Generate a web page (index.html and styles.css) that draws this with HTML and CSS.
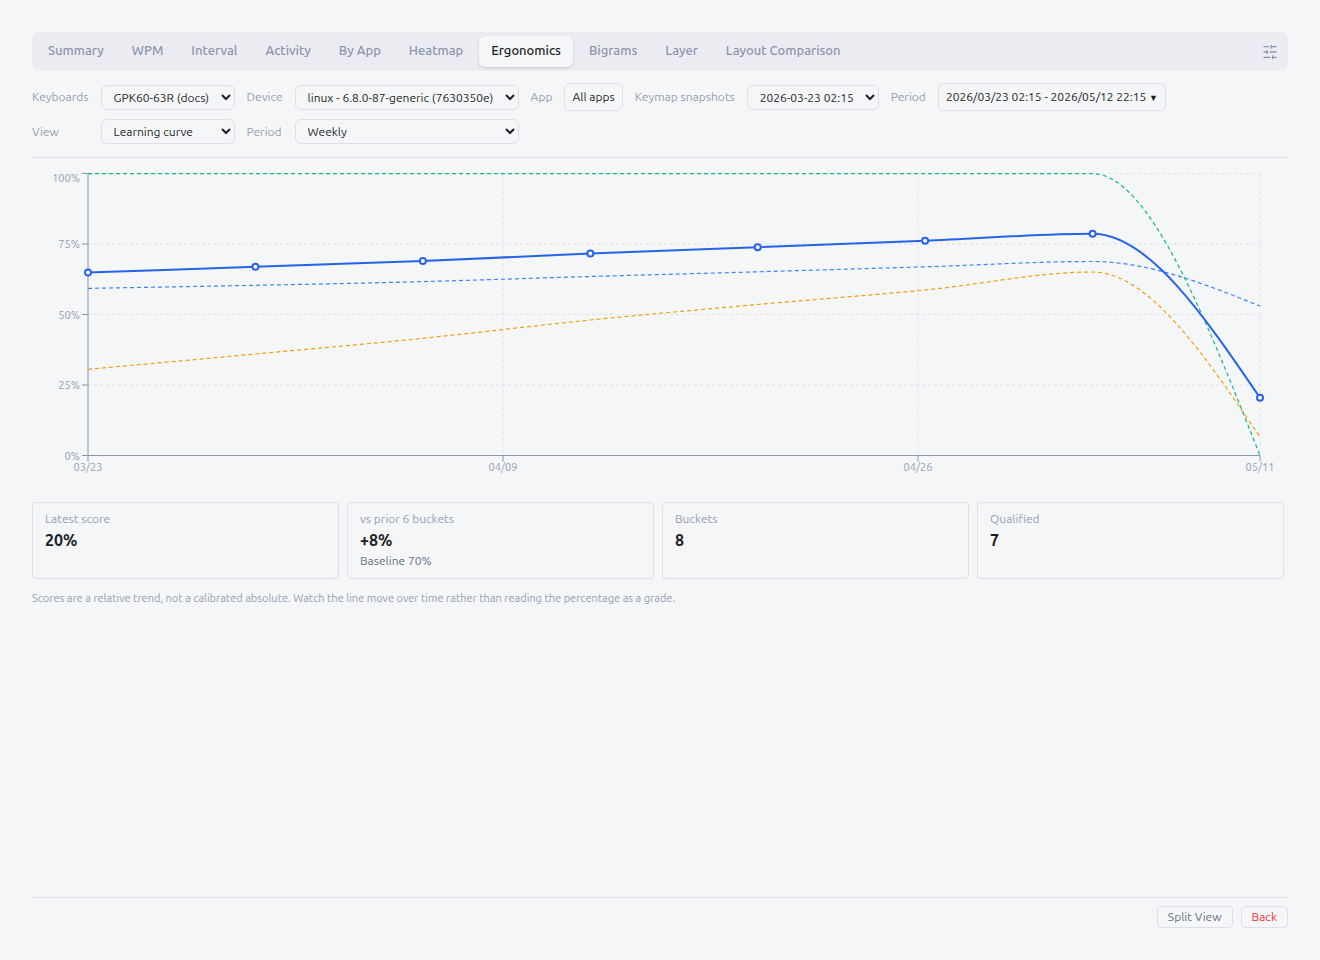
FILE: index.html
```html
<!DOCTYPE html>
<html lang="en">
<head>
  <meta charset="UTF-8">
  <meta name="viewport" content="width=device-width, initial-scale=1.0">
  <title>Typing Analytics</title>
  <link rel="stylesheet" href="styles.css">
</head>
<body>

  <!-- Tabs -->
  <nav class="tabs">
    <button class="tab">Summary</button>
    <button class="tab">WPM</button>
    <button class="tab">Interval</button>
    <button class="tab">Activity</button>
    <button class="tab">By App</button>
    <button class="tab">Heatmap</button>
    <button class="tab active">Ergonomics</button>
    <button class="tab">Bigrams</button>
    <button class="tab">Layer</button>
    <button class="tab">Layout Comparison</button>
    <button class="tab-settings" aria-label="Settings">
      <svg width="16" height="16" viewBox="0 0 24 24" fill="none" stroke="currentColor" stroke-width="2" stroke-linecap="round">
        <path d="M21 4h-7M10 4H3M21 12h-9M8 12H3M21 20h-5M12 20H3M14 2v4M8 10v4M16 18v4"/>
      </svg>
    </button>
  </nav>

  <!-- Filters -->
  <div class="filters">
    <label for="keyboard">Keyboards</label>
    <select id="keyboard"><option>GPK60-63R (docs)</option></select>
    <label for="device">Device</label>
    <select id="device"><option>linux - 6.8.0-87-generic (7630350e)</option></select>
    <label for="app">App</label>
    <button class="filter-btn" id="app">All apps</button>
    <label for="snapshot">Keymap snapshots</label>
    <select id="snapshot"><option>2026-03-23 02:15</option></select>
    <label for="range">Period</label>
    <button class="filter-btn" id="range">2026/03/23 02:15 - 2026/05/12 22:15 <span class="caret">▼</span></button>

    <label for="view">View</label>
    <select id="view"><option>Learning curve</option></select>
    <label for="period">Period</label>
    <select id="period"><option>Weekly</option></select>
  </div>

  <main class="content">
    <!-- Learning curve -->
    <svg class="chart" viewBox="0 0 1256 325" role="img" aria-label="Learning curve">
      <g class="grid">
        <path d="M56 8.5H1228M56 79H1228M56 149.5H1228M56 220H1228"/>
        <path d="M471 8.5V290.5M886 8.5V290.5M1228 8.5V290.5"/>
      </g>
      <g class="axis">
        <path d="M56 8.5V290.5M56 290.5H1228"/>
        <path d="M50 8.5h6M50 79h6M50 149.5h6M50 220h6M50 290.5h6"/>
        <path d="M56 290.5v6M471 290.5v6M886 290.5v6M1228 290.5v6"/>
      </g>
      <g class="tick-y">
        <text x="48" y="17">100%</text>
        <text x="48" y="83">75%</text>
        <text x="48" y="154">50%</text>
        <text x="48" y="224">25%</text>
        <text x="48" y="295">0%</text>
      </g>
      <g class="tick-x">
        <text x="56" y="306">03/23</text>
        <text x="471" y="306">04/09</text>
        <text x="886" y="306">04/26</text>
        <text x="1228" y="306">05/11</text>
      </g>
      <path class="line dashed blue" d="M56 123.4C111.8 122.4 167.6 121.4 223.4 120.3C279.2 119.2 335.1 118.1 390.9 116.6C446.7 115.1 502.5 113.1 558.3 111.5C614.1 109.9 669.9 108.4 725.7 106.8C781.5 105.2 837.3 103.5 893.1 101.8C948.9 100.1 1004.8 96.5 1060.6 96.5C1116.4 96.5 1172.2 118.7 1228 141"/>
      <path class="line dashed green" d="M56 8.7H1060.6C1116.4 8.7 1172.2 149.5 1228 290.5"/>
      <path class="line dashed orange" d="M56 204.3C111.8 199.2 167.6 194.2 223.4 189C279.2 183.8 335.1 179 390.9 173.3C446.7 167.6 502.5 160.6 558.3 155C614.1 149.4 669.9 144.5 725.7 139.5C781.5 134.5 837.3 130.4 893.1 125C948.9 119.6 1004.8 107 1060.6 107C1116.4 107 1172.2 189.5 1228 272"/>
      <path class="line score" d="M56 107.6C111.8 105.7 167.6 103.7 223.4 101.8C279.2 99.8 335.1 98.1 390.9 95.9C446.7 93.7 502.5 90.9 558.3 88.6C614.1 86.3 669.9 84.3 725.7 82.2C781.5 80.1 837.3 78 893.1 75.8C948.9 73.6 1004.8 68.8 1060.6 68.8C1116.4 68.8 1172.2 150.8 1228 232.8"/>
      <g class="dots">
        <circle cx="56" cy="107.6" r="3"/>
        <circle cx="223.4" cy="101.8" r="3"/>
        <circle cx="390.9" cy="95.9" r="3"/>
        <circle cx="558.3" cy="88.6" r="3"/>
        <circle cx="725.7" cy="82.2" r="3"/>
        <circle cx="893.1" cy="75.8" r="3"/>
        <circle cx="1060.6" cy="68.8" r="3"/>
        <circle cx="1228" cy="232.8" r="3"/>
      </g>
    </svg>

    <!-- Stats -->
    <div class="stats">
      <div class="stat">
        <div class="stat-label">Latest score</div>
        <div class="stat-value">20%</div>
      </div>
      <div class="stat">
        <div class="stat-label">vs prior 6 buckets</div>
        <div class="stat-value">+8%</div>
        <div class="stat-sub">Baseline 70%</div>
      </div>
      <div class="stat">
        <div class="stat-label">Buckets</div>
        <div class="stat-value">8</div>
      </div>
      <div class="stat">
        <div class="stat-label">Qualified</div>
        <div class="stat-value">7</div>
      </div>
    </div>

    <p class="note">Scores are a relative trend, not a calibrated absolute. Watch the line move over time rather than reading the percentage as a grade.</p>
  </main>

  <footer class="footer">
    <button class="footer-btn">Split View</button>
    <button class="footer-btn back">Back</button>
  </footer>

</body>
</html>
```
FILE: styles.css
```css
* {
  box-sizing: border-box;
}

body {
  margin: 0;
  padding: 32px;
  min-height: 100vh;
  display: flex;
  flex-direction: column;
  background: #f4f6f8;
  color: #1c1f26;
  font-family: Ubuntu, "Noto Sans", sans-serif;
  font-size: 12px;
  line-height: 16px;
}

button,
select {
  font: inherit;
  color: inherit;
  cursor: pointer;
}

/* Tabs */
.tabs {
  display: flex;
  align-items: center;
  gap: 4px;
  padding: 4px;
  border-radius: 8px;
  background: #ebecf2;
}

.tab {
  padding: 5px 12px 7px;
  border: none;
  border-radius: 6px;
  background: none;
  color: #8b94ad;
  font-size: 13px;
  font-weight: 500;
  line-height: 19px;
}

.tab.active {
  background: #f4f6f8;
  color: #1c1f26;
  box-shadow: 0 1px 3px rgba(0, 0, 0, 0.15);
}

.tab-settings {
  display: flex;
  margin-left: auto;
  padding: 6px;
  border: none;
  background: none;
  color: #8b94ad;
}

/* Filters */
.filters {
  display: grid;
  grid-template-columns: repeat(10, auto);
  justify-content: start;
  align-items: center;
  gap: 8px 12px;
  padding: 12px 0 13px;
  border-bottom: 1px solid #dde0e9;
}

.filters label {
  color: #959db4;
  white-space: nowrap;
}

.filters select {
  width: 100%;
  height: 25px;
  padding: 0 8px;
  border: 1px solid #dde0e9;
  border-radius: 6px;
  background: #f4f6f8;
}

.filter-btn {
  height: 28px;
  padding: 0 7px;
  border: 1px solid #dde0e9;
  border-radius: 6px;
  background: #f4f6f8;
  white-space: nowrap;
}

.caret {
  font-size: 9px;
}

/* Chart */
.content {
  flex: 1;
  padding: 7px 0 12px;
}

.chart {
  display: block;
  width: 100%;
  height: auto;
  overflow: visible;
}

.chart text {
  fill: #959db4;
  font-size: 11px;
}

.tick-y {
  text-anchor: end;
}

.tick-x {
  text-anchor: middle;
}

.grid path {
  fill: none;
  stroke: #dde0e9;
  stroke-dasharray: 3 3;
}

.axis path {
  fill: none;
  stroke: #8b94ad;
}

.line {
  fill: none;
}

.dashed {
  stroke-width: 1.2;
  stroke-dasharray: 4 3;
}

.blue {
  stroke: #3b82f6;
}

.green {
  stroke: #10b981;
}

.orange {
  stroke: #f59e0b;
}

.score {
  stroke: #2563eb;
  stroke-width: 2;
}

.dots circle {
  fill: #fff;
  stroke: #2563eb;
  stroke-width: 2;
}

/* Stats */
.stats {
  display: grid;
  grid-template-columns: repeat(4, 1fr);
  gap: 8px;
  margin: 12px 4px 0 0;
}

.stat {
  padding: 8px 12px 9px;
  border: 1px solid #dde0e9;
  border-radius: 4px;
}

.stat-label {
  color: #959db4;
}

.stat-value {
  font-size: 16px;
  font-weight: 600;
  line-height: 26px;
}

.stat-sub {
  color: #667085;
}

.note {
  margin: 11px 0 0;
  color: #959db4;
  font-size: 11px;
}

/* Footer */
.footer {
  display: flex;
  justify-content: flex-end;
  gap: 8px;
  padding-top: 8px;
  border-top: 1px solid #dde0e9;
}

.footer-btn {
  height: 22px;
  padding: 0 10px;
  border: 1px solid #dde0e9;
  border-radius: 4px;
  background: none;
  color: #667085;
}

.footer-btn.back {
  color: #fb2c36;
}
```
